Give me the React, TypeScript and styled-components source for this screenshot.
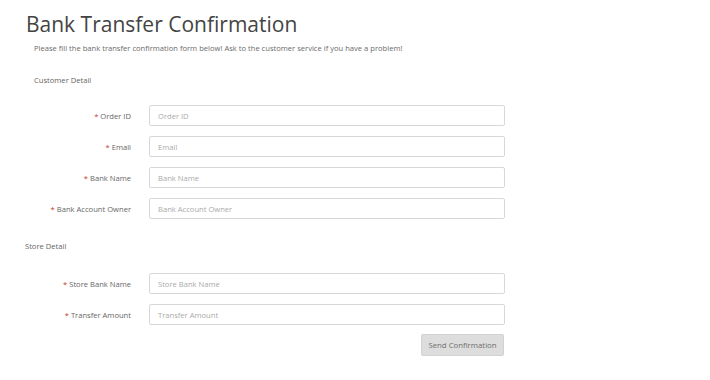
import React from "react";
import styled, { createGlobalStyle } from "styled-components";

const Global = createGlobalStyle`
  html, body { margin: 0; padding: 0; background: #fff; }
  body { font-family: "Open Sans", "Liberation Sans", sans-serif; color: #666; }
  * { box-sizing: border-box; }
`;

const Page = styled.div`
  width: 710px;
  height: 380px;
  padding: 10px 0 0 25px;
  overflow: hidden;
`;

const Title = styled.h1`
  margin: 0 0 0 1px;
  font-size: 21px;
  font-weight: 400;
  line-height: 28px;
  color: #444;
`;

const Intro = styled.p`
  margin: 4px 0 0 9px;
  font-size: 7.6px;
  line-height: 12px;
  color: #6a6a6a;
`;

const Section = styled.h2<{ $indent: number; $top: number }>`
  margin: ${(p) => p.$top}px 0 0 ${(p) => p.$indent}px;
  font-size: 7.6px;
  line-height: 12px;
  font-weight: 400;
  color: #666;
`;

const Fields = styled.div<{ $top: number }>`
  display: grid;
  grid-template-columns: 106px 356px;
  column-gap: 18px;
  row-gap: 10px;
  margin-top: ${(p) => p.$top}px;
  align-items: center;
`;

const Label = styled.label`
  text-align: right;
  font-size: 7.6px;
  color: #666;
  white-space: nowrap;
`;

const Star = styled.span`
  color: #c0392b;
  margin-right: 2px;
`;

const Input = styled.input`
  height: 21px;
  width: 100%;
  border: 1px solid #d8d8d8;
  border-radius: 2px;
  padding: 0 8px;
  font-family: inherit;
  font-size: 7.6px;
  color: #666;
  background: #fff;
  outline: none;
  &::placeholder { color: #aaa; }
`;

const Actions = styled.div`
  display: flex;
  justify-content: flex-end;
  width: 479px;
  margin-top: 9px;
`;

const Button = styled.button`
  height: 22px;
  width: 83px;
  border: 1px solid #d2d2d2;
  border-radius: 2px;
  background: #dddddd;
  font-family: inherit;
  font-size: 7.8px;
  color: #6e6e6e;
  padding: 0;
`;

const customer = ["Order ID", "Email", "Bank Name", "Bank Account Owner"];
const store = ["Store Bank Name", "Transfer Amount"];

function FieldList({ names, top }: { names: string[]; top: number }) {
  return (
    <Fields $top={top}>
      {names.map((n) => (
        <React.Fragment key={n}>
          <Label>
            <Star>*</Star>
            {n}
          </Label>
          <Input placeholder={n} />
        </React.Fragment>
      ))}
    </Fields>
  );
}

export default function App() {
  return (
    <Page>
      <Global />
      <Title>Bank Transfer Confirmation</Title>
      <Intro>
        Please fill the bank transfer confirmation form below! Ask to the customer service if you have a problem!
      </Intro>
      <Section $indent={9} $top={20}>Customer Detail</Section>
      <FieldList names={customer} top={19} />
      <Section $indent={0} $top={21}>Store Detail</Section>
      <FieldList names={store} top={21} />
      <Actions>
        <Button>Send Confirmation</Button>
      </Actions>
    </Page>
  );
}
